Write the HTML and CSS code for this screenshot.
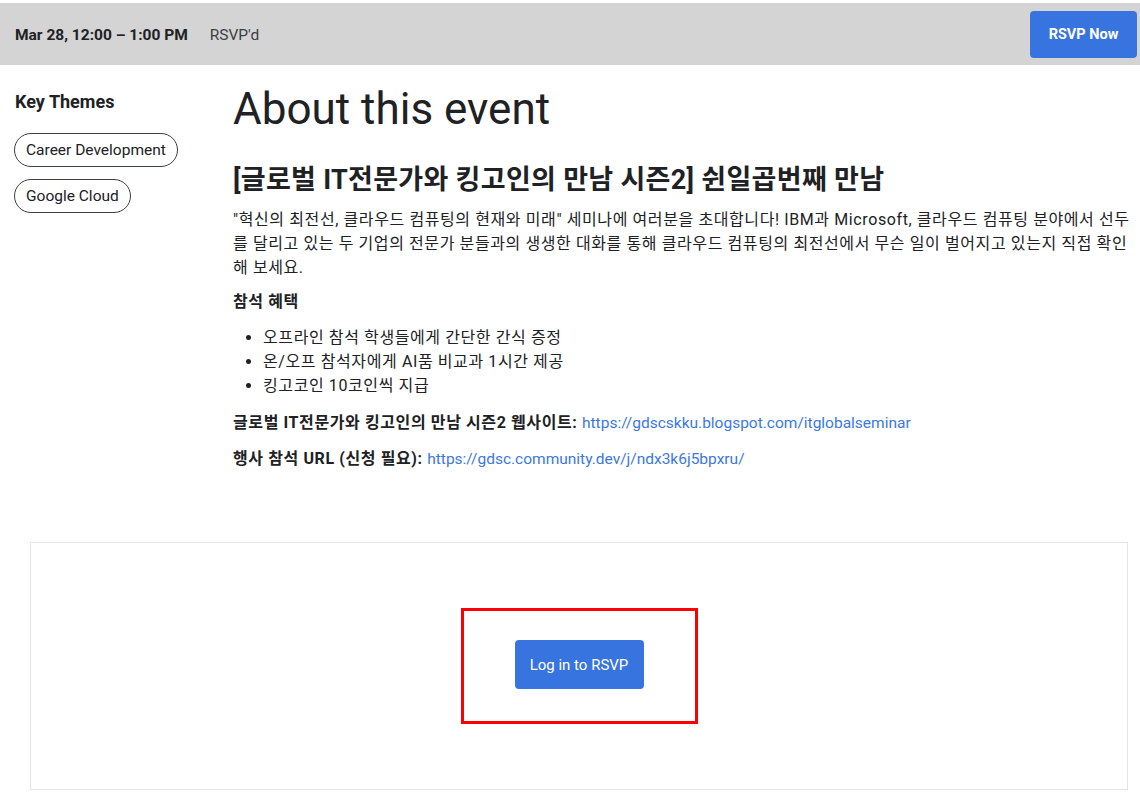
FILE: index.html
```html
<!DOCTYPE html>
<html lang="ko">
<head>
  <meta charset="UTF-8">
  <meta name="viewport" content="width=device-width, initial-scale=1.0">
  <title>About this event</title>
  <link rel="stylesheet" href="styles.css">
</head>
<body>
  <header class="topbar">
    <div class="topbar-info">
      <span class="event-date">Mar 28, 12:00 – 1:00 PM</span>
      <span class="event-status">RSVP'd</span>
    </div>
    <button class="btn-primary btn-top">RSVP Now</button>
  </header>

  <div class="page">
    <aside class="sidebar">
      <h3>Key Themes</h3>
      <div class="chips">
        <span class="chip">Career Development</span>
        <span class="chip">Google Cloud</span>
      </div>
    </aside>

    <main class="content">
      <h1>About this event</h1>
      <h2>[글로벌 IT전문가와 킹고인의 만남 시즌2] 쉰일곱번째 만남</h2>
      <p class="intro">"혁신의 최전선, 클라우드 컴퓨팅의 현재와 미래" 세미나에 여러분을 초대합니다! IBM과 Microsoft, 클라우드 컴퓨팅 분야에서 선두를 달리고 있는 두 기업의 전문가 분들과의 생생한 대화를 통해 클라우드 컴퓨팅의 최전선에서 무슨 일이 벌어지고 있는지 직접 확인해 보세요.</p>
      <p><strong>참석 혜택</strong></p>
      <ul>
        <li>오프라인 참석 학생들에게 간단한 간식 증정</li>
        <li>온/오프 참석자에게 AI품 비교과 1시간 제공</li>
        <li>킹고코인 10코인씩 지급</li>
      </ul>
      <p><strong>글로벌 IT전문가와 킹고인의 만남 시즌2 웹사이트:</strong> <a href="#">https://gdscskku.blogspot.com/itglobalseminar</a></p>
      <p><strong>행사 참석 URL (신청 필요):</strong> <a href="#">https://gdsc.community.dev/j/ndx3k6j5bpxru/</a></p>
    </main>
  </div>

  <section class="rsvp-card">
    <div class="highlight">
      <button class="btn-primary btn-login">Log in to RSVP</button>
    </div>
  </section>
</body>
</html>
```

FILE: styles.css
```css
body {
  margin: 0;
  font-family: Roboto, "Noto Sans CJK KR", sans-serif;
  color: #202124;
  background: white;
}
.topbar {
  margin-top: 3px;
  height: 62px;
  background: #d4d4d4;
  display: flex;
  align-items: center;
  justify-content: space-between;
  padding: 0 3px 0 15px;
}
.topbar-info {
  display: flex;
  gap: 22px;
  font-size: 15.5px;
  padding-top: 1px;
}
.event-date {
  font-weight: bold;
}
.event-status {
  color: #3c4043;
}
.btn-primary {
  background: #3874e0;
  color: white;
  border: none;
  border-radius: 4px;
  font-family: Roboto, sans-serif;
  cursor: pointer;
}
.btn-top {
  width: 107px;
  height: 47px;
  font-size: 14.5px;
  font-weight: bold;
}
.page {
  display: flex;
  padding: 0 5px 0 15px;
}
.sidebar {
  width: 218px;
  flex-shrink: 0;
}
.sidebar h3 {
  margin: 26px 0 21px;
  font-size: 18px;
  font-weight: bold;
}
.chips {
  display: flex;
  flex-direction: column;
  align-items: flex-start;
  gap: 12px;
}
.chip {
  border: 1px solid #3c4043;
  border-radius: 20px;
  padding: 0 11px;
  height: 32px;
  line-height: 32px;
  font-size: 15.5px;
  margin-left: -1px;
}
.content {
  flex: 1;
  font-size: 16px;
  line-height: 24px;
  letter-spacing: 0.6px;
}
.content h1 {
  font-size: 44px;
  font-weight: normal;
  letter-spacing: 0;
  line-height: 50px;
  margin: 19px 0 29px;
}
.content h2 {
  font-size: 27px;
  font-weight: bold;
  letter-spacing: 0.3px;
  line-height: 34px;
  margin: 0 0 11px;
}
.content p {
  margin: 0 0 12px;
}
.content p.intro {
  margin-bottom: 10px;
}
.content ul {
  margin: 0 0 13px;
  padding-left: 30px;
}
.content a {
  color: #3c78e2;
  text-decoration: none;
  letter-spacing: 0;
  font-size: 15.5px;
}
.rsvp-card {
  margin: 59px 12px 10px 30px;
  height: 246px;
  border: 1px solid #e5e5e5;
  display: flex;
  align-items: center;
  justify-content: center;
}
.highlight {
  border: 3px solid #f00;
  padding: 29px 51px 32px 51px;
}
.btn-login {
  width: 129px;
  height: 49px;
  font-size: 15px;
}
```
